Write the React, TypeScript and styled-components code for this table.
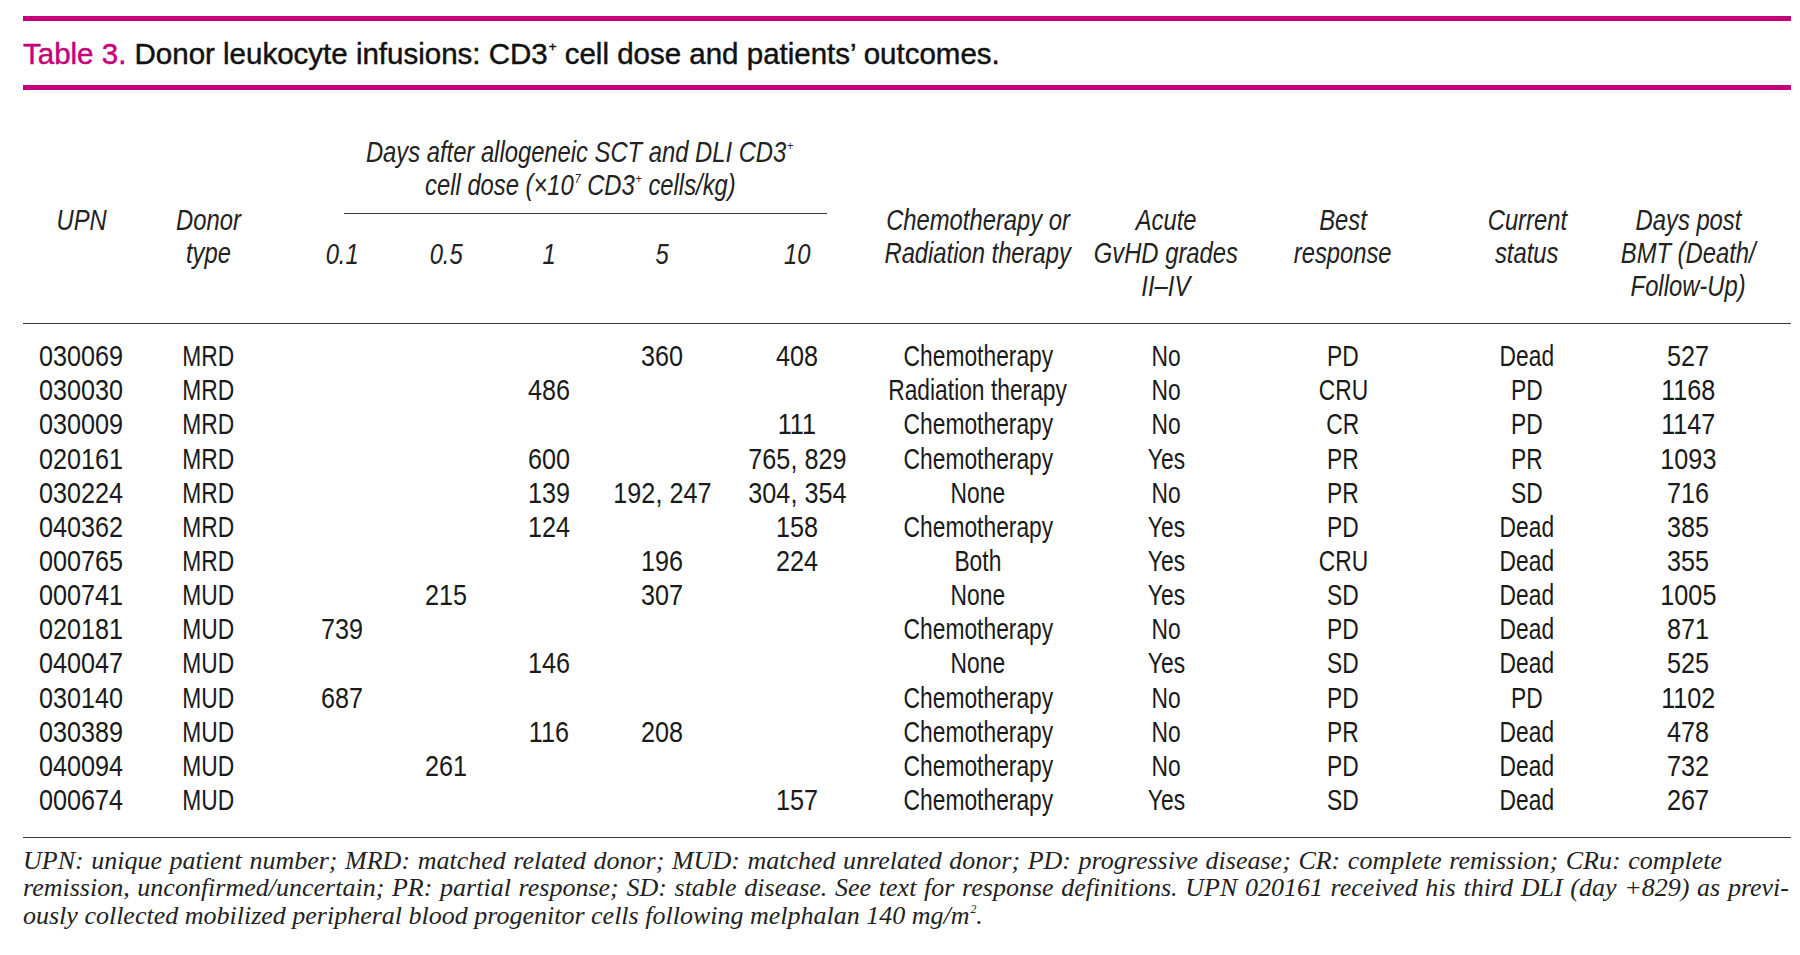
import React from 'react';
import styled, { createGlobalStyle } from 'styled-components';

const GlobalStyle = createGlobalStyle`
  body {
    margin: 0;
    background: #fff;
    color: #1d1d1d;
  }
`;

const COLS = '117px 136px 132px 76px 130px 96px 174px 188px 188px 166px 202px 120px';
const SANS = `"Liberation Sans", Arial, sans-serif`;
const PINK = '#c6007b';

const Page = styled.div`
  width: 1768px;
  padding-left: 23px;
  padding-top: 16px;
`;

const Caption = styled.div`
  border-top: 5px solid ${PINK};
  border-bottom: 5px solid ${PINK};
  padding: 16.6px 0 15.4px;
  font-family: ${SANS};
  font-size: 29.5px;
  line-height: 32px;
  color: #111;
  -webkit-text-stroke: 0.45px currentColor;
`;

const Label = styled.span`
  color: ${PINK};
`;

const Sup = styled.sup`
  font-size: 0.45em;
  line-height: 0;
  vertical-align: 0.95em;
  margin-left: 1px;
`;

/* no condensed face is installed, so the narrow table type is squeezed */
const Squeeze = styled.span<{ $x: number }>`
  display: inline-block;
  transform: scaleX(${(p) => p.$x});
  white-space: nowrap;
`;

const HeadGrid = styled.div`
  display: grid;
  grid-template-columns: ${COLS};
  grid-template-rows: 78.8px auto;
  padding: 46.2px 43px 19.7px 0;
  border-bottom: 1.5px solid #3a3a3a;
  font-family: ${SANS};
  font-style: italic;
  font-size: 29px;
  line-height: 33px;
  color: #222;
`;

const SpanHead = styled.div`
  grid-column: 3 / span 5;
  grid-row: 1;
  display: flex;
  flex-direction: column;
  align-items: center;
`;

const SpanRule = styled.div`
  align-self: stretch;
  margin: 11.3px 57px 0 68px;
  border-top: 1.5px solid #3a3a3a;
`;

const HeadCell = styled.div<{ $dose?: boolean }>`
  grid-row: ${(p) => (p.$dose ? '2' : '1 / span 2')};
  padding-top: ${(p) => (p.$dose ? '23.4px' : '67.7px')};
  display: flex;
  flex-direction: column;
  align-items: center;
`;

const Body = styled.div`
  padding: 15.5px 43px 20px 0;
  border-bottom: 1.5px solid #3a3a3a;
  font-family: ${SANS};
  font-size: 30px;
  line-height: 34.15px;
  color: #1a1a1a;
`;

const Row = styled.div`
  display: grid;
  grid-template-columns: ${COLS};
`;

const Cell = styled.div`
  display: flex;
  justify-content: center;
`;

const Notes = styled.div`
  margin-top: 8.5px;
  font-family: "Liberation Serif", "Times New Roman", serif;
  font-style: italic;
  font-size: 26px;
  line-height: 27.5px;
  color: #222;
`;

const NoteLine = styled.div<{ $width?: number }>`
  white-space: nowrap;
  width: ${(p) => (p.$width ? `${p.$width}px` : 'auto')};
  text-align: ${(p) => (p.$width ? 'justify' : 'left')};
  text-align-last: ${(p) => (p.$width ? 'justify' : 'left')};
`;

type Rec = [string, string, string, string, string, string, string, string, string, string, string, string];

const rows: Rec[] = [
  ['030069', 'MRD', '', '', '', '360', '408', 'Chemotherapy', 'No', 'PD', 'Dead', '527'],
  ['030030', 'MRD', '', '', '486', '', '', 'Radiation therapy', 'No', 'CRU', 'PD', '1168'],
  ['030009', 'MRD', '', '', '', '', '111', 'Chemotherapy', 'No', 'CR', 'PD', '1147'],
  ['020161', 'MRD', '', '', '600', '', '765, 829', 'Chemotherapy', 'Yes', 'PR', 'PR', '1093'],
  ['030224', 'MRD', '', '', '139', '192, 247', '304, 354', 'None', 'No', 'PR', 'SD', '716'],
  ['040362', 'MRD', '', '', '124', '', '158', 'Chemotherapy', 'Yes', 'PD', 'Dead', '385'],
  ['000765', 'MRD', '', '', '', '196', '224', 'Both', 'Yes', 'CRU', 'Dead', '355'],
  ['000741', 'MUD', '', '215', '', '307', '', 'None', 'Yes', 'SD', 'Dead', '1005'],
  ['020181', 'MUD', '739', '', '', '', '', 'Chemotherapy', 'No', 'PD', 'Dead', '871'],
  ['040047', 'MUD', '', '', '146', '', '', 'None', 'Yes', 'SD', 'Dead', '525'],
  ['030140', 'MUD', '687', '', '', '', '', 'Chemotherapy', 'No', 'PD', 'PD', '1102'],
  ['030389', 'MUD', '', '', '116', '208', '', 'Chemotherapy', 'No', 'PR', 'Dead', '478'],
  ['040094', 'MUD', '', '261', '', '', '', 'Chemotherapy', 'No', 'PD', 'Dead', '732'],
  ['000674', 'MUD', '', '', '', '', '157', 'Chemotherapy', 'Yes', 'SD', 'Dead', '267'],
];

const doses = ['0.1', '0.5', '1', '5', '10'];

const heads: string[][] = [
  ['UPN'],
  ['Donor', 'type'],
];

const tailHeads: string[][] = [
  ['Chemotherapy or', 'Radiation therapy'],
  ['Acute', 'GvHD grades', 'II–IV'],
  ['Best', 'response'],
  ['Current', 'status'],
  ['Days post', 'BMT (Death/', 'Follow-Up)'],
];

const HX = 0.82;
// figures sit wider than words in the original condensed face
const bodyScale = (v: string) => (/^[\d, ]+$/.test(v) ? 0.84 : 0.76);

const Head = ({ lines }: { lines: string[] }) => (
  <HeadCell>
    {lines.map((l) => (
      <Squeeze key={l} $x={HX}>
        {l}
      </Squeeze>
    ))}
  </HeadCell>
);

const App = () => (
  <Page>
    <GlobalStyle />
    <Caption>
      <Label>Table 3.</Label> Donor leukocyte infusions: CD3<Sup>+</Sup> cell dose and patients’ outcomes.
    </Caption>

    <HeadGrid>
      {heads.map((h) => (
        <Head key={h[0]} lines={h} />
      ))}
      <SpanHead>
        <Squeeze $x={HX}>
          Days after allogeneic SCT and DLI CD3<Sup>+</Sup>
        </Squeeze>
        <Squeeze $x={HX}>
          cell dose (×10<Sup>7</Sup> CD3<Sup>+</Sup> cells/kg)
        </Squeeze>
        <SpanRule />
      </SpanHead>
      {doses.map((d) => (
        <HeadCell key={d} $dose>
          <Squeeze $x={HX}>{d}</Squeeze>
        </HeadCell>
      ))}
      {tailHeads.map((h) => (
        <Head key={h[0]} lines={h} />
      ))}
    </HeadGrid>

    <Body>
      {rows.map((r) => (
        <Row key={r[0]}>
          {r.map((v, i) => (
            <Cell key={i}>{v && <Squeeze $x={bodyScale(v)}>{v}</Squeeze>}</Cell>
          ))}
        </Row>
      ))}
    </Body>

    <Notes>
      <NoteLine $width={1699}>
        UPN: unique patient number; MRD: matched related donor; MUD: matched unrelated donor; PD: progressive disease; CR: complete remission; CRu: complete
      </NoteLine>
      <NoteLine $width={1766}>
        remission, unconfirmed/uncertain; PR: partial response; SD: stable disease. See text for response definitions. UPN 020161 received his third DLI (day +829) as previ-
      </NoteLine>
      <NoteLine>
        ously collected mobilized peripheral blood progenitor cells following melphalan 140 mg/m<Sup>2</Sup>.
      </NoteLine>
    </Notes>
  </Page>
);

export default App;
